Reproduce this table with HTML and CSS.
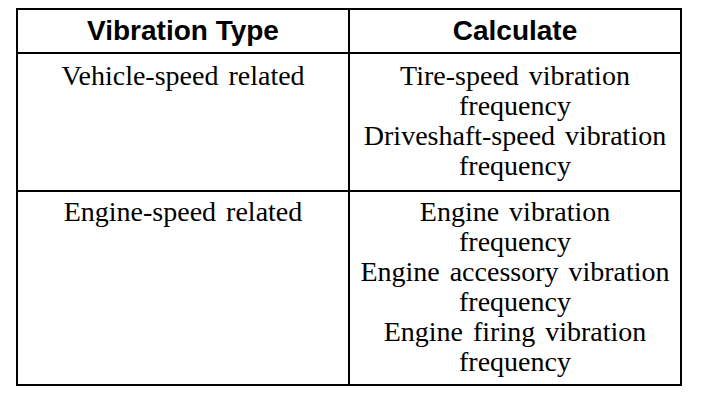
FILE: index.html
```html
<!DOCTYPE html>
<html>
<head>
<meta charset="utf-8">
<link rel="stylesheet" href="styles.css">
</head>
<body>
<table class="vib">
  <thead>
    <tr>
      <th>Vibration Type</th>
      <th>Calculate</th>
    </tr>
  </thead>
  <tbody>
    <tr class="row1">
      <td>Vehicle-speed related</td>
      <td>Tire-speed vibration<br>frequency<br>Driveshaft-speed vibration<br>frequency</td>
    </tr>
    <tr class="row2">
      <td>Engine-speed related</td>
      <td>Engine vibration<br>frequency<br>Engine accessory vibration<br>frequency<br>Engine firing vibration<br>frequency</td>
    </tr>
  </tbody>
</table>
</body>
</html>
```

FILE: styles.css
```css
html, body {
  margin: 0;
  padding: 0;
  background: #fff;
}
body {
  padding: 8px 0 0 16px;
}
.vib {
  border-collapse: collapse;
  width: 666px;
  table-layout: fixed;
  color: #000;
}
.vib th, .vib td {
  border: 2px solid #000;
  width: 50%;
  text-align: center;
  vertical-align: top;
  padding: 0;
}
.vib th {
  font-family: "Liberation Sans", Arial, sans-serif;
  font-weight: bold;
  font-size: 28px;
  height: 42px;
  line-height: 42px;
  vertical-align: middle;
}
.vib td {
  font-family: "Liberation Serif", "Times New Roman", serif;
  font-size: 28px;
  line-height: 30px;
  word-spacing: 3px;
}
.row1 td {
  padding-top: 7px;
  height: 129px;
}
.row2 td {
  padding-top: 5px;
  height: 187px;
}
```
